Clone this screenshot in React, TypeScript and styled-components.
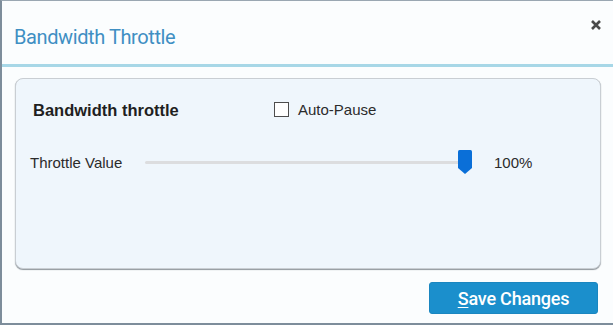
import * as React from 'react';
import styled, { createGlobalStyle } from 'styled-components';

const Global = createGlobalStyle`
  html, body { margin: 0; padding: 0; background: #fcfdfe; }
  body { font-family: "Liberation Sans", Arial, sans-serif; }
`;

const Dialog = styled.div`
  width: 613px;
  height: 325px;
  box-sizing: border-box;
  background: #fbfdfe;
  border-top: 1px solid #9aa7b2;
  border-left: 2px solid #7d8d9b;
  border-bottom: 2px solid #7d8d9b;
  display: flex;
  flex-direction: column;
`;

const Header = styled.div`
  height: 66px;
  flex-shrink: 0;
  box-sizing: border-box;
  border-bottom: 3px solid #a7d7e7;
  display: flex;
  align-items: flex-start;
  justify-content: space-between;
  padding: 24px 10px 0 12px;
`;

const Title = styled.h1`
  margin: 0;
  font-family: Roboto, "Liberation Sans", sans-serif;
  font-weight: 400;
  font-size: 20px;
  color: #3f8fc3;
  letter-spacing: -0.4px;
`;

const Close = styled.button`
  border: none;
  background: none;
  padding: 0;
  margin-top: -7px;
  width: 14px;
  height: 14px;
  cursor: pointer;
`;

const Body = styled.div`
  padding: 11px 12px 0 13px;
`;

const Panel = styled.div`
  height: 191px;
  box-sizing: border-box;
  background: #eff6fc;
  border: 1px solid #c9ced3;
  border-radius: 8px;
  box-shadow: 0 1px 1px #8f969c;
  padding: 22px 20px 0 17px;
`;

const Row = styled.div<{ $gap?: number }>`
  display: flex;
  align-items: center;
  margin-top: ${p => p.$gap ?? 0}px;
`;

const SectionLabel = styled.div`
  width: 241px;
  font-weight: 700;
  font-size: 16.5px;
  color: #1f1f1f;
`;

const Check = styled.label`
  display: flex;
  align-items: center;
  gap: 9px;
  font-size: 15px;
  color: #2b2b2b;
  margin-top: -3px;
`;

const Box = styled.span`
  width: 13px;
  height: 13px;
  border: 1px solid #4d4d4d;
  background: #fff;
`;

const FieldLabel = styled.div`
  width: 115px;
  margin-left: -3px;
  font-size: 15px;
  color: #2b2b2b;
`;

const Track = styled.div`
  position: relative;
  width: 327px;
  height: 24px;
  display: flex;
  align-items: center;
`;

const Rail = styled.div`
  height: 3px;
  width: 100%;
  background: #dcdddf;
  border-radius: 2px;
`;

const Thumb = styled.svg`
  position: absolute;
  top: 0;
  width: 14px;
  height: 24px;
`;

const Value = styled.div`
  margin-left: 22px;
  font-size: 15px;
  color: #2b2b2b;
`;

const Footer = styled.div`
  display: flex;
  justify-content: flex-end;
  padding: 13px 15px 0 0;
`;

const SaveButton = styled.button`
  width: 169px;
  height: 32px;
  background: #1b8fcc;
  border: 1px solid #1a86c0;
  border-radius: 3px;
  color: #fff;
  font-family: Roboto, "Liberation Sans", sans-serif;
  font-weight: 500;
  font-size: 18px;
  letter-spacing: -0.2px;
  cursor: pointer;
  u { text-decoration-thickness: 1px; text-underline-offset: 2px; }
`;

export default function App() {
  const percent = 100;
  return (
    <>
      <Global />
      <Dialog>
        <Header>
          <Title>Bandwidth Throttle</Title>
          <Close aria-label="Close">
            <svg width="14" height="14" viewBox="0 0 14 14">
              <path d="M3 3 L11 11 M11 3 L3 11" stroke="#4a4a4a" strokeWidth="2.6" />
            </svg>
          </Close>
        </Header>
        <Body>
          <Panel>
            <Row>
              <SectionLabel>Bandwidth throttle</SectionLabel>
              <Check>
                <Box />
                Auto-Pause
              </Check>
            </Row>
            <Row $gap={30}>
              <FieldLabel>Throttle Value</FieldLabel>
              <Track>
                <Rail />
                <Thumb viewBox="0 0 14 24" style={{ left: `calc(${percent}% - 14px)` }}>
                  <path d="M1.5 0 H12.5 Q14 0 14 1.5 V18 L7 24 L0 18 V1.5 Q0 0 1.5 0 Z" fill="#0a6fd8" />
                </Thumb>
              </Track>
              <Value>{percent}%</Value>
            </Row>
          </Panel>
        </Body>
        <Footer>
          <SaveButton><u>S</u>ave Changes</SaveButton>
        </Footer>
      </Dialog>
    </>
  );
}
